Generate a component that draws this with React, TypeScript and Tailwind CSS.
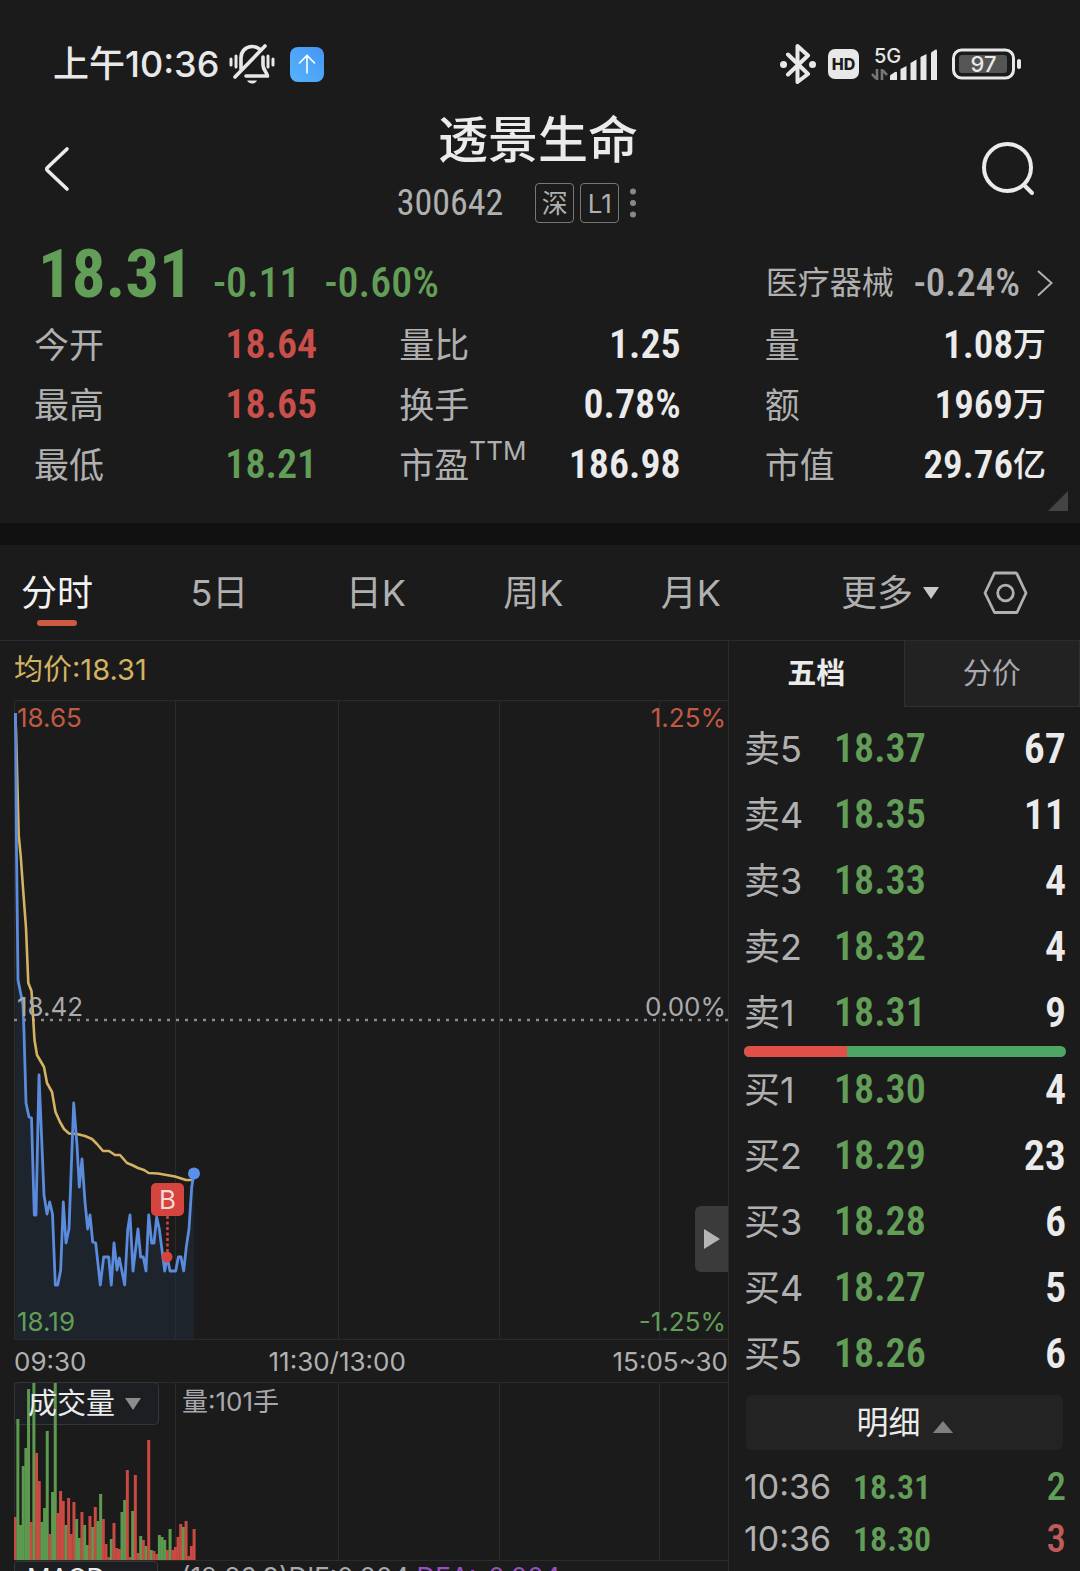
import type { ReactNode } from "react";

const stats = [
  { label: "今开", value: "18.64", color: "text-[#c9504a]" },
  { label: "量比", value: "1.25", color: "text-[#ebebeb]" },
  { label: "量", value: "1.08", unit: "万", color: "text-[#ebebeb]" },
  { label: "最高", value: "18.65", color: "text-[#c9504a]" },
  { label: "换手", value: "0.78%", color: "text-[#ebebeb]" },
  { label: "额", value: "1969", unit: "万", color: "text-[#ebebeb]" },
  { label: "最低", value: "18.21", color: "text-[#629e58]" },
  { label: "市盈", sup: "TTM", value: "186.98", color: "text-[#ebebeb]" },
  { label: "市值", value: "29.76", unit: "亿", color: "text-[#ebebeb]" },
];

const periods = ["分时", "5日", "日K", "周K", "月K"];

const asks = [
  ["卖5", "18.37", "67"],
  ["卖4", "18.35", "11"],
  ["卖3", "18.33", "4"],
  ["卖2", "18.32", "4"],
  ["卖1", "18.31", "9"],
];

const bids = [
  ["买1", "18.30", "4"],
  ["买2", "18.29", "23"],
  ["买3", "18.28", "6"],
  ["买4", "18.27", "5"],
  ["买5", "18.26", "6"],
];

const trades = [
  { time: "10:36", price: "18.31", qty: "2", color: "text-[#629e58]" },
  { time: "10:36", price: "18.30", qty: "3", color: "text-[#c05a58]" },
];

const priceLine =
  "15.5,713 16.5,850 18,980 23,1005 24,1032 26,1103 29,1117 31.5,1118 34.3,1215 36,1215 39,1075 44,1195 47,1214 49.7,1202 52.5,1214 55.3,1285 57.7,1285 60.7,1270 63.3,1202 66,1243 69,1229 73.7,1103 77,1145 79.3,1187 82,1159 85,1202 87.7,1229 90,1215 92.7,1242 95.7,1243 100.3,1285 103.7,1257 108.7,1257 111.3,1285 114,1243 117,1270 119.3,1258 124.7,1285 127.7,1230 130,1215 133,1271 138,1229 140.7,1257 143.3,1257 146,1271 148.7,1215 151.7,1243 154,1243 156.7,1217 159.3,1229 164.7,1271 167.3,1257 170,1271 175.7,1271 178.3,1257 181,1257 183.7,1271 186.3,1247 189,1229 191.7,1187 194,1173";

const averageLine =
  "15,713 16,730 18.7,835 20.7,856 23,888 26,928 28.3,983 31.5,991 34.5,1040 37,1055 44,1067 47,1083 52,1092 55.5,1112 60,1122 64,1129 69,1133.5 77,1134 85,1136 92,1139 97,1144 103,1151 109,1151 115,1155 120,1155 127,1163 132,1165 138,1168 144,1170 148.7,1173 158,1173.5 175,1176.5 186,1180 192,1180";

// one bar per minute: height and direction
const volumes =
  "43r 141g 35g 94g 112g 171g 38r 177g 107r 79r 38g 52g 129g 26r 68g 177g 47r 69r 59r 35g 62r 26r 58r 41g 22g 48r 35g 15g 44r 33g 53r 39g 66g 41r 16r 3r 21g 37r 12r 11r 48g 60g 90r 3r 49g 85r 7r 24g 20r 14g 120r 10g 9r 6r 25g 23g 20g 10r 31g 10r 13r 23r 36r 33g 39r 4r 14r 31r".split(
    " "
  );

const gridX = [175.5, 338.5, 499.5, 659.5];

function Num({ className, children }: { className: string; children: ReactNode }) {
  return (
    <span className={`[font-family:'Roboto_Condensed',Roboto,sans-serif] ${className}`}>
      {children}
    </span>
  );
}

function StatusBar() {
  return (
    <div className="flex items-center justify-between pt-10 pl-[53px] pr-[58px] text-[#e8e8e8]">
      <div className="flex items-center h-12">
        <span className="text-[36px] font-medium">上午10:36</span>
        <svg className="ml-2.5 w-[46px] h-10" viewBox="0 0 46 40" fill="none" stroke="currentColor" strokeWidth="3.6" strokeLinecap="round">
          <path d="M2 15v6M7 12v11M39 12v11M44 15v6" strokeWidth="3" />
          <path d="M12 25V14c0-7 5-11.500 11-11.500 3 0 5.500 1 7.500 2.500" />
          <path d="M34 13v8c0 5 4 7 4.500 11H17" strokeLinejoin="round" />
          <path d="M6 33 36 2" />
          <path d="M18 36.500h10c-1 2-3 3-5 3s-4-1-5-3z" fill="currentColor" stroke="none" />
        </svg>
        <span className="ml-[15px] flex items-center justify-center w-[34px] h-[35px] rounded-[8px] bg-linear-to-tr from-[#56b4fb] to-[#4795f4]">
          <svg className="w-5 h-5" viewBox="0 0 20 20" fill="none" stroke="white" strokeWidth="1.6" strokeLinecap="round">
            <path d="M10 19V1.500M2.500 9 10 1.500 17.500 9" />
          </svg>
        </span>
      </div>
      <div className="flex items-center h-12">
        <svg className="w-9 h-10" viewBox="0 0 36 40" fill="none" stroke="currentColor" strokeWidth="4" strokeLinejoin="round" strokeLinecap="round">
          <path d="M8 10.500 28 30 17.500 38V2L28 11.500 8 30.500" />
          <circle cx="3.500" cy="20.500" r="3.500" fill="currentColor" stroke="none" />
          <circle cx="32.500" cy="20.500" r="3.500" fill="currentColor" stroke="none" />
        </svg>
        <span className="ml-3 flex items-center justify-center w-[31px] h-[30px] rounded-[7px] bg-[#e8e8e8] text-[#1b1b1b] text-[16px] font-extrabold">
          HD
        </span>
        <div className="relative ml-3 w-[67px] h-10">
          <span className="absolute left-[3px] top-0 text-[20px] leading-6 font-medium">5G</span>
          <svg className="w-full h-full" viewBox="0 0 67 40" fill="currentColor">
            <path d="M6 25v11M1 30l4 4.500M11 36V25M16 31l-4-4.500" stroke="#777777" strokeWidth="2.6" fill="none" />
            <path d="M19 36v-4q0-1 2-2l3-2q2-1 2 1v7zM29.500 36V25l6-3v14zM39.500 36V19l6-3.500V36zM49.500 36V13l6-3v26zM60 36V9q0-1 3-2.500 3-2 3 .5v29z" />
          </svg>
        </div>
        <svg className="ml-3.5 w-[70px] h-8" viewBox="0 0 70 32">
          <rect x="1.500" y="2" width="60" height="28" rx="8" fill="none" stroke="currentColor" strokeWidth="3" />
          <rect x="7" y="7" width="48" height="18" rx="3" fill="#555555" />
          <rect x="65" y="11" width="4" height="10" rx="2" fill="currentColor" />
          <text x="31.500" y="24" textAnchor="middle" fontSize="22" fontWeight="500" fill="currentColor">
            97
          </text>
        </svg>
      </div>
    </div>
  );
}

function Header() {
  return (
    <header className="flex items-center justify-between pl-10 pr-11 pt-4">
      <button type="button" aria-label="返回" className="w-[68px]">
        <svg className="w-8 h-12" viewBox="0 0 32 48" fill="none" stroke="#ebebeb" strokeWidth="3.6" strokeLinecap="round" strokeLinejoin="round">
          <path d="M27 5 7.500 23.500q-1.500 1.500 0 3L27 45" />
        </svg>
      </button>
      <div className="flex flex-col items-center">
        <h1 className="pt-0.5 text-[50px] leading-[68px] font-medium text-[#ebebeb]">透景生命</h1>
        <div className="flex items-center h-[58px] pr-[42px] text-[#b0b0b0]">
          <Num className="text-[36px]">300642</Num>
          <span className="ml-8 flex items-center justify-center w-[39px] h-[40px] rounded border border-[#777777] text-[26px]">
            深
          </span>
          <span className="ml-1.5 flex items-center justify-center w-[39px] h-[40px] rounded border border-[#777777] text-[26px]">
            L1
          </span>
          <svg className="ml-2.5 w-2 h-8" viewBox="0 0 8 32" fill="#888888">
            <circle cx="4" cy="4.500" r="3" />
            <circle cx="4" cy="16" r="3" />
            <circle cx="4" cy="27.500" r="3" />
          </svg>
        </div>
      </div>
      <button type="button" aria-label="搜索" className="flex justify-end w-[68px]">
        <svg className="w-14 h-14" viewBox="0 0 56 56" fill="none" stroke="#ebebeb" strokeWidth="4" strokeLinecap="round">
          <circle cx="27.500" cy="27.500" r="23.500" />
          <path d="m44 45 8 8" />
        </svg>
      </button>
    </header>
  );
}

function Quote() {
  return (
    <section className="relative px-[34px] pb-7">
      <div className="flex items-start justify-between h-[83px]">
        <div className="flex items-baseline pt-1 pl-1 text-[#629e58]">
          <Num className="text-[67px] leading-[76px] font-bold">18.31</Num>
          <Num className="ml-5 text-[42px] font-medium">-0.11</Num>
          <Num className="ml-6 text-[42px] font-medium">-0.60%</Num>
        </div>
        <a href="#sector" className="mt-[29px] -mr-2 flex items-center h-11 text-[#b0b0b0]">
          <span className="text-[32px]">医疗器械</span>
          <Num className="ml-5 text-[39px] font-medium">-0.24%</Num>
          <svg className="ml-4 w-[18px] h-7" viewBox="0 0 18 28" fill="none" stroke="currentColor" strokeWidth="2">
            <path d="M2 2 15.500 14 2 26.500" />
          </svg>
        </a>
      </div>
      <dl className="grid grid-cols-3 gap-x-[84px]">
        {stats.map((s, i) => (
          <div key={s.label} className="flex items-center justify-between h-[60px]">
            <dt className="text-[35px] text-[#b0b0b0]">
              {s.label}
              {s.sup && <sup className="text-[26px] -top-[18px]">{s.sup}</sup>}
            </dt>
            <dd className={`flex items-center font-semibold ${s.color} ${i % 3 === 0 ? "w-[90px]" : ""}`}>
              <Num className={s.unit ? "text-[39px]" : "text-[40px]"}>{s.value}</Num>
              {s.unit && <span className="text-[33px] font-medium">{s.unit}</span>}
            </dd>
          </div>
        ))}
      </dl>
      <svg className="absolute right-3 bottom-3 w-5 h-5" viewBox="0 0 20 20" fill="#444444">
        <path d="M20 0v20H0z" />
      </svg>
    </section>
  );
}

function PeriodTabs() {
  return (
    <nav className="flex items-center h-24 pl-[21px] pr-[52px] border-b border-[#2c2c2c] text-[36px] text-[#b0b0b0]">
      <div className="flex flex-1 justify-between">
        {periods.map((p, i) => (
          <button key={p} type="button" className={`relative ${i === 0 ? "text-[#f2f2f2]" : ""}`}>
            {p}
            {i === 0 && (
              <span className="absolute left-1/2 -translate-x-1/2 -bottom-1.5 w-10 h-1.5 rounded-full bg-[#cc5a40]" />
            )}
          </button>
        ))}
      </div>
      <button type="button" className="ml-[120px] flex items-center">
        更多
        <svg className="ml-2.5 w-4 h-3" viewBox="0 0 16 12" fill="#c8c8c8">
          <path d="M0 0h16L8 12z" />
        </svg>
      </button>
      <button type="button" aria-label="设置" className="ml-11">
        <svg className="w-[45px] h-11" viewBox="0 0 45 44" fill="none" stroke="currentColor" strokeWidth="2.8" strokeLinejoin="round">
          <path d="M12.500 2h20q1 0 1.500 1L43 22l-9 19.500H11.500L2 22 11.500 2z" />
          <circle cx="22.500" cy="22" r="7.800" />
        </svg>
      </button>
    </nav>
  );
}

function PriceChart() {
  return (
    <div className="relative text-[26px] leading-8">
      <svg className="block w-full h-[640px]" viewBox="14 700 714 640" preserveAspectRatio="none" fill="none">
        <path d="M14.500 1340V700.500H728M14 1339.500H728" stroke="#2b2b2b" />
        <polygon points={`15,1339 ${priceLine} 194,1339`} fill="#1d242c" />
        {gridX.map((x) => (
          <path key={x} d={`M${x} 700V1340`} stroke="#2b2b2b" />
        ))}
        <path d="M14 1020H728" stroke="#8a8a8a" strokeWidth="2.5" strokeDasharray="3 6" />
        <polyline points={averageLine} stroke="#d3b262" strokeWidth="2.6" strokeLinejoin="round" />
        <polyline points={priceLine} stroke="#5b8bdc" strokeWidth="2.8" strokeLinejoin="round" />
        <circle cx="194" cy="1173.500" r="6" fill="#5a8fea" />
        <path d="M167.500 1216V1252" stroke="#d5443f" strokeWidth="2.5" strokeDasharray="3 2.5" />
        <circle cx="167" cy="1257" r="5.500" fill="#d5443f" />
        <rect x="151" y="1183" width="33" height="33" rx="5" fill="#d5443f" />
        <text x="167.500" y="1209" textAnchor="middle" fontSize="26" fill="#f3d8d8">
          B
        </text>
      </svg>
      <span className="absolute left-[3px] top-0.5 text-[#c05a44]">18.65</span>
      <span className="absolute right-0.5 top-0.5 text-[#c05a44]">1.25%</span>
      <span className="absolute left-[3px] top-[291px] text-[#a9a9ae]">18.42</span>
      <span className="absolute right-0.5 top-[291px] text-[#a9a9ae]">0.00%</span>
      <span className="absolute left-[3px] bottom-0.5 text-[#629e58]">18.19</span>
      <span className="absolute right-0.5 bottom-0.5 text-[#629e58]">-1.25%</span>
      <button
        type="button"
        aria-label="展开"
        className="absolute right-0 bottom-[68px] flex items-center justify-center w-[33px] h-[66px] rounded-l-md bg-[#3b3b3b]"
      >
        <svg className="w-4 h-5" viewBox="0 0 16 20" fill="#b5b5b5">
          <path d="M0 0 16 10 0 20z" />
        </svg>
      </button>
    </div>
  );
}

function VolumeChart() {
  return (
    <div className="relative">
      <svg className="block w-full h-[179px]" viewBox="14 1382 714 179" preserveAspectRatio="none" fill="none">
        <path d="M14.500 1561V1382.500H728M14 1560.500H728" stroke="#2b2b2b" />
        <rect x="14.500" y="1382.500" width="144" height="42" rx="4" fill="#1c1e22" stroke="#33363a" />
        {gridX.map((x) => (
          <path key={x} d={`M${x} 1382V1561`} stroke="#2b2b2b" />
        ))}
        {volumes.map((v, i) => {
          const h = parseInt(v);
          return (
            <rect
              key={i}
              x={13.7 + i * 2.67}
              y={1560 - h}
              width={3}
              height={h}
              fill={v.endsWith("r") ? "#c84a42" : "#5c9a50"}
            />
          );
        })}
      </svg>
      <button
        type="button"
        className="absolute left-0 top-0 flex items-center w-[145px] h-[43px] pl-3.5 text-[29px] text-[#ebebeb]"
      >
        成交量
        <svg className="ml-2.5 w-4 h-3" viewBox="0 0 16 12" fill="#8c8c8c">
          <path d="M0 0h16L8 12z" />
        </svg>
      </button>
      <span className="absolute left-[168px] top-0.5 text-[26px] leading-9 text-[#a9a9ae]">量:101手</span>
    </div>
  );
}

function Charts() {
  return (
    <div className="flex-1 pl-3.5 border-r border-[#2c2c2c]">
      <p className="h-[59px] text-[29px] leading-[58px] text-[#d3b262]">均价:18.31</p>
      <PriceChart />
      <div className="flex h-[42px] text-[26px] leading-[44px] text-[#b0b0b0]">
        <span>09:30</span>
        <span className="ml-[182px]">11:30/13:00</span>
        <span className="ml-auto">15:05~30</span>
      </div>
      <VolumeChart />
      <div className="flex text-[26px] leading-8">
        <button type="button" className="w-[144px] pl-3 text-left rounded border border-[#33363a] bg-[#1c1e22] text-[#ebebeb]">
          MACD
        </button>
        <p className="ml-[23px] text-[#a9a9ae]">
          (12,26,9)DIF:0.004 <span className="text-[#9b4fc0]">DEA:-0.004</span>
        </p>
      </div>
    </div>
  );
}

function Levels({ rows }: { rows: string[][] }) {
  return (
    <table className="w-full">
      <tbody>
        {rows.map(([label, price, qty]) => (
          <tr key={label} className="h-[66px]">
            <th scope="row" className="w-[90px] p-0 text-left text-[36px] leading-10 font-normal text-[#b0b0b0]">
              {label}
            </th>
            <td className="p-0 text-[#629e58]">
              <Num className="block text-[40px] leading-10 font-semibold">{price}</Num>
            </td>
            <td className="p-0 text-right text-[#ebebeb]">
              <Num className="block text-[42px] leading-10 font-semibold">{qty}</Num>
            </td>
          </tr>
        ))}
      </tbody>
    </table>
  );
}

function OrderBook() {
  return (
    <aside className="w-[351px]">
      <div className="flex h-[66px] text-[29px]">
        <button type="button" className="flex-1 font-bold text-[#ebebeb]">
          五档
        </button>
        <button type="button" className="flex-1 border border-t-0 border-[#303030] bg-[#222222] text-[#a9a9b0]">
          分价
        </button>
      </div>
      <div className="pt-[9px] pl-[15px] pr-3.5">
        <Levels rows={asks} />
        <div className="flex h-[11px] rounded-full overflow-hidden bg-[#4fa664]">
          <div className="w-[32%] bg-[#e05048]" />
        </div>
        <Levels rows={bids} />
        <button
          type="button"
          className="flex items-center justify-center mt-2 ml-0.5 w-[317px] h-[55px] rounded-md bg-[#232323] text-[32px] text-[#ebebeb]"
        >
          明细
          <svg className="ml-3 mt-2 w-5 h-3" viewBox="0 0 20 12" fill="#808080">
            <path d="M0 12h20L10 0z" />
          </svg>
        </button>
        <table className="w-full mt-[11px]">
          <tbody>
            {trades.map((t, i) => (
              <tr key={i} className="h-[52px]">
                <td className="w-[109px] p-0 text-[34px] leading-10 text-[#b0b0b0]">{t.time}</td>
                <td className="p-0 text-[#629e58]">
                  <Num className="block text-[34px] leading-10 font-semibold">{t.price}</Num>
                </td>
                <td className={`p-0 text-right ${t.color}`}>
                  <Num className="block text-[39px] leading-10 font-medium">{t.qty}</Num>
                </td>
              </tr>
            ))}
          </tbody>
        </table>
      </div>
    </aside>
  );
}

export default function App() {
  return (
    <div className="h-screen overflow-hidden bg-[#1b1b1b] [font-family:Inter,'Noto_Sans_CJK_SC',sans-serif]">
      <StatusBar />
      <Header />
      <Quote />
      <div className="h-[22px] bg-[#111111]" />
      <PeriodTabs />
      <main className="flex">
        <Charts />
        <OrderBook />
      </main>
    </div>
  );
}
